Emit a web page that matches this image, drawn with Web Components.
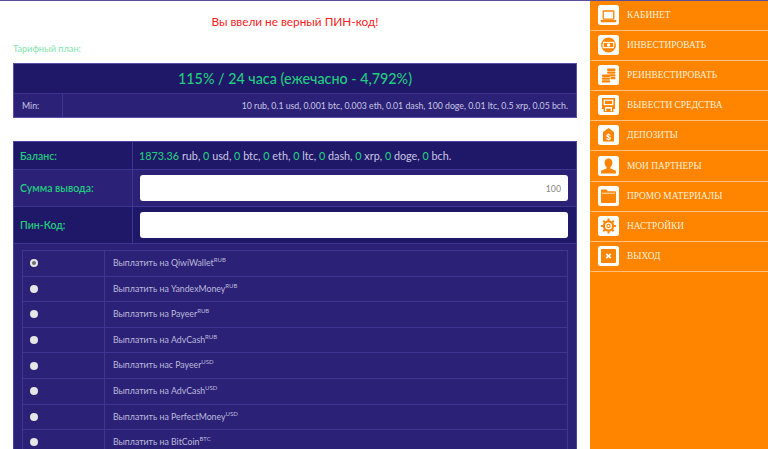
<!DOCTYPE html>
<html lang="ru">
<head>
<meta charset="utf-8">
<title>Вывод средств</title>
<style>
    html, body { margin: 0; height: 449px; overflow: hidden; background: #fff; }
    body { font-family: Lato, "Noto Sans", sans-serif; }
    #page { display: flex; height: 449px; border-top: 1px solid #5b4f9c; box-sizing: border-box; }
</style>
</head>
<body>
<div id="page">
    <withdraw-main>
        <error-note>Вы ввели не верный ПИН-код!</error-note>
        <plan-card title-text="115% / 24 часа (ежечасно - 4,792%)" min-text="10 rub, 0.1 usd, 0.001 btc, 0.003 eth, 0.01 dash, 100 doge, 0.01 ltc, 0.5 xrp, 0.05 bch.">Тарифный план:</plan-card>
        <withdraw-form></withdraw-form>
    </withdraw-main>
    <side-menu>
        <menu-item icon="laptop">Кабинет</menu-item>
        <menu-item icon="invest">Инвестировать</menu-item>
        <menu-item icon="coins">Реинвестировать</menu-item>
        <menu-item icon="atm">Вывести средства</menu-item>
        <menu-item icon="deposit">Депозиты</menu-item>
        <menu-item icon="user">Мои партнеры</menu-item>
        <menu-item icon="folder">Промо материалы</menu-item>
        <menu-item icon="gear">Настройки</menu-item>
        <menu-item icon="exit">Выход</menu-item>
    </side-menu>
</div>

<script>
class WithdrawMain extends HTMLElement {
    constructor() {
        super();
        this.attachShadow({mode: 'open'});
        this.shadowRoot.innerHTML = `
            <style>
                :host { display: block; width: 590px; flex: none; box-sizing: border-box; padding: 0 13px; overflow: hidden; }
            </style>
            <slot></slot>`;
    }
}

class ErrorNote extends HTMLElement {
    constructor() {
        super();
        this.attachShadow({mode: 'open'});
        this.shadowRoot.innerHTML = `
            <style>
                :host { display: block; text-align: center; color: #f81c1c; font-size: 11.8px; line-height: 18px; padding-top: 12px; height: 29px; }
            </style>
            <slot></slot>`;
    }
}

class PlanCard extends HTMLElement {
    constructor() {
        super();
        this.attachShadow({mode: 'open'});
    }

    connectedCallback() {
        const title = this.getAttribute('title-text');
        const min = this.getAttribute('min-text');
        this.shadowRoot.innerHTML = `
            <style>
                :host { display: block; }
                .label { color: #7fe3ae; font-size: 9.2px; line-height: 14px; height: 21px; }
                .card { border: 1px solid #5a50a8; background: #1f1768; height: 55px; box-sizing: border-box; }
                .head { height: 30px; box-sizing: border-box; text-align: center; color: #22cc7f; font-size: 14.3px; font-weight: 500; line-height: 30px; border-bottom: 1px solid #3b3290; }
                .row { display: flex; height: 23px; background: #2b2277; color: #c9c6e4; font-size: 8.75px; line-height: 23px; }
                .min { width: 49px; padding-left: 8px; box-sizing: border-box; border-right: 1px solid #3f3694; }
                .val { flex: 1; text-align: right; padding-right: 8px; }
            </style>
            <div class="label"><slot></slot></div>
            <div class="card">
                <div class="head">${title}</div>
                <div class="row"><div class="min">Min:</div><div class="val">${min}</div></div>
            </div>`;
    }
}

class WithdrawForm extends HTMLElement {
    constructor() {
        super();
        this.attachShadow({mode: 'open'});
        this.render();
    }

    render() {
        const balance = [['1873.36', 'rub'], ['0', 'usd'], ['0', 'btc'], ['0', 'eth'], ['0', 'ltc'], ['0', 'dash'], ['0', 'xrp'], ['0', 'doge'], ['0', 'bch']]
            .map(([v, c]) => `<b>${v}</b> ${c}`).join(', ') + '.';
        const methods = [
            ['Выплатить на QiwiWallet', 'RUB'],
            ['Выплатить на YandexMoney', 'RUB'],
            ['Выплатить на Payeer', 'RUB'],
            ['Выплатить на AdvCash', 'RUB'],
            ['Выплатить нас Payeer', 'USD'],
            ['Выплатить на AdvCash', 'USD'],
            ['Выплатить на PerfectMoney', 'USD'],
            ['Выплатить на BitCoin', 'BTC']
        ];
        const rows = methods.map(([name, cur], index) => `
            <div class="method">
                <div class="pick"><input type="radio" name="ps"${index === 0 ? ' checked' : ''}></div>
                <div class="name">${name}<sup>${cur}</sup></div>
            </div>`).join('');

        this.shadowRoot.innerHTML = `
            <style>
                :host { display: block; margin-top: 23px; background: #2b2277; border: 1px solid #4c43a0; border-bottom: 0; }
                .row { display: grid; grid-template-columns: 119px 1fr; box-sizing: border-box; border-bottom: 1px solid #3f3694; }
                .row > div { display: flex; align-items: center; box-sizing: border-box; }
                .k { color: #22cc7f; font-size: 10.5px; font-weight: 600; padding-left: 6px; border-right: 1px solid #3f3694; }
                .v { padding: 0 8px 0 7px; }
                .balance { height: 28px; background: #1f1768; }
                .balance .v { color: #c9c6e4; font-size: 10.8px; padding-left: 6px; white-space: pre-wrap; display: block; line-height: 27px; }
                .balance b { color: #22cc7f; font-weight: 500; }
                .sum { height: 37px; }
                .pin { height: 37px; background: #1f1768; }
                input.text { width: 100%; height: 26px; box-sizing: border-box; border: 0; border-radius: 3px; background: #fff; text-align: right; padding: 0 7px; font: 8.75px Lato, sans-serif; color: #888; outline: 0; }
                .methods { margin: 6px 8px 0; border: 1px solid #3f3694; border-bottom: 0; }
                .method { display: grid; grid-template-columns: 82px 1fr; height: 25.6px; box-sizing: border-box; border-bottom: 1px solid #3f3694; }
                .pick { display: flex; align-items: center; padding-left: 7px; border-right: 1px solid #3f3694; }
                input[type=radio] { appearance: none; margin: 0; width: 8px; height: 8px; border-radius: 50%; background: #e6e6e6; position: relative; }
                input[type=radio]:checked::after { content: ''; position: absolute; inset: 2px; border-radius: 50%; background: #6f6f6f; }
                .name { padding-left: 8px; color: #bdb9dc; font-size: 8.75px; line-height: 24px; }
                sup { font-size: 6px; line-height: 0; vertical-align: 4px; }
            </style>
            <div class="row balance"><div class="k">Баланс:</div><div class="v">${balance}</div></div>
            <div class="row sum"><div class="k">Сумма вывода:</div><div class="v"><input class="text" value="100"></div></div>
            <div class="row pin"><div class="k">Пин-Код:</div><div class="v"><input class="text" type="password"></div></div>
            <div class="methods">${rows}</div>`;
    }
}

class SideMenu extends HTMLElement {
    constructor() {
        super();
        this.attachShadow({mode: 'open'});
        this.shadowRoot.innerHTML = `
            <style>
                :host { display: block; flex: 1; background: #ff8400; }
            </style>
            <slot></slot>`;
    }
}

// icons are orange shapes on the white rounded tile
const ICONS = {
    laptop: '<rect x="5.2" y="6" width="10.6" height="8.2" rx=".8" fill="none" stroke="#ff8400" stroke-width="1.3"/><path d="M2.7 15h15.6v1.2a1 1 0 0 1-1 1H3.7a1 1 0 0 1-1-1z" fill="#ff8400"/>',
    invest: '<circle cx="10.5" cy="10" r="7.4" fill="#ff8400"/><path d="M4.6 6.8h11.8v6.4H4.6z" fill="#fff"/><path d="M5.8 7.9h9.4v4.2H5.8z" fill="#ff8400"/><circle cx="10.5" cy="10" r="1.7" fill="#fff"/><path d="M2.4 8.6 5 6.8v2zM18.6 11.4 16 13.2v-2z" fill="#ff8400"/>',
    coins: '<g fill="#ff8400"><rect x="9" y="3.6" width="8.5" height="2.3" rx="1.1"/><rect x="9" y="6.4" width="8.5" height="2.3" rx="1.1"/><rect x="11.5" y="9.2" width="6" height="2.3" rx="1.1"/><rect x="12.5" y="12" width="5" height="2.3" rx="1.1"/><rect x="3.8" y="9.6" width="8.5" height="2.3" rx="1.1"/><rect x="3.8" y="12.4" width="8.5" height="2.3" rx="1.1"/><rect x="3.8" y="15.2" width="8.5" height="2.3" rx="1.1"/></g>',
    atm: '<path d="M4 3h13v11h-1.6v3H5.6v-3H4z" fill="#ff8400"/><rect x="5.6" y="4.6" width="9.8" height="5.6" fill="#fff"/><rect x="7" y="5.8" width="7" height="3.2" fill="#ff8400"/><path d="M7 12h7v4.2h-1.4v-2.8H8.4v2.8H7z" fill="#fff"/>',
    deposit: '<path d="M10.5 3 16 7v9.5H5V7z" fill="#ff8400"/><text x="10.5" y="14.6" text-anchor="middle" font-family="Liberation Sans, sans-serif" font-size="8.5" font-weight="700" fill="#fff">$</text>',
    user: '<path d="M10.5 2.5c2.5 0 3.9 1.9 3.9 4.2 0 1.9-.9 3.6-2 4.5v1.2l4.5 1.9c.9.4 1.1 1 1.1 3.2H3c0-2.2.2-2.8 1.1-3.2l4.5-1.9v-1.2c-1.1-.9-2-2.6-2-4.5 0-2.3 1.4-4.2 3.9-4.2z" fill="#ff8400"/>',
    folder: '<path d="M4 3.5h4.5l1.2 1.7H17a1 1 0 0 1 1 1v9.8a1 1 0 0 1-1 1H4a1 1 0 0 1-1-1V4.5a1 1 0 0 1 1-1z" fill="#ff8400"/><rect x="4" y="6.8" width="13" height=".8" fill="#fff"/>',
    gear: '<g fill="none" stroke="#ff8400"><circle cx="10.5" cy="10" r="4.6" stroke-width="2.2"/><circle cx="10.5" cy="10" r="1.6" stroke-width="1.1"/><path d="M10.5 2.6v3M10.5 14.4v3M3.1 10h3M14.9 10h3M5.3 4.8l2.1 2.1M13.6 13.1l2.1 2.1M15.7 4.8l-2.1 2.1M7.4 13.1l-2.1 2.1" stroke-width="2"/></g>',
    exit: '<rect x="3" y="3" width="15" height="14" rx="1" fill="#ff8400"/><path d="M8.2 7.8l4.6 4.4M12.8 7.8l-4.6 4.4" stroke="#fff" stroke-width="1.6" fill="none"/>'
};

class MenuItem extends HTMLElement {
    constructor() {
        super();
        this.attachShadow({mode: 'open'});
    }

    connectedCallback() {
        const icon = ICONS[this.getAttribute('icon')] || '';
        this.shadowRoot.innerHTML = `
            <style>
                :host { display: flex; align-items: center; height: 30.1px; box-sizing: border-box; padding: 0 0 1px 8px; border-bottom: 1px solid #ffc080; color: #fff0dc; font: 9.4px "Liberation Serif", serif; text-transform: uppercase; }
                svg { width: 21px; height: 20px; flex: none; margin-right: 8px; }
            </style>
            <svg viewBox="0 0 21 20"><rect width="21" height="20" rx="2.5" fill="#fff"/>${icon}</svg>
            <slot></slot>`;
    }
}

customElements.define('withdraw-main', WithdrawMain);
customElements.define('error-note', ErrorNote);
customElements.define('plan-card', PlanCard);
customElements.define('withdraw-form', WithdrawForm);
customElements.define('side-menu', SideMenu);
customElements.define('menu-item', MenuItem);
</script>
</body>
</html>
